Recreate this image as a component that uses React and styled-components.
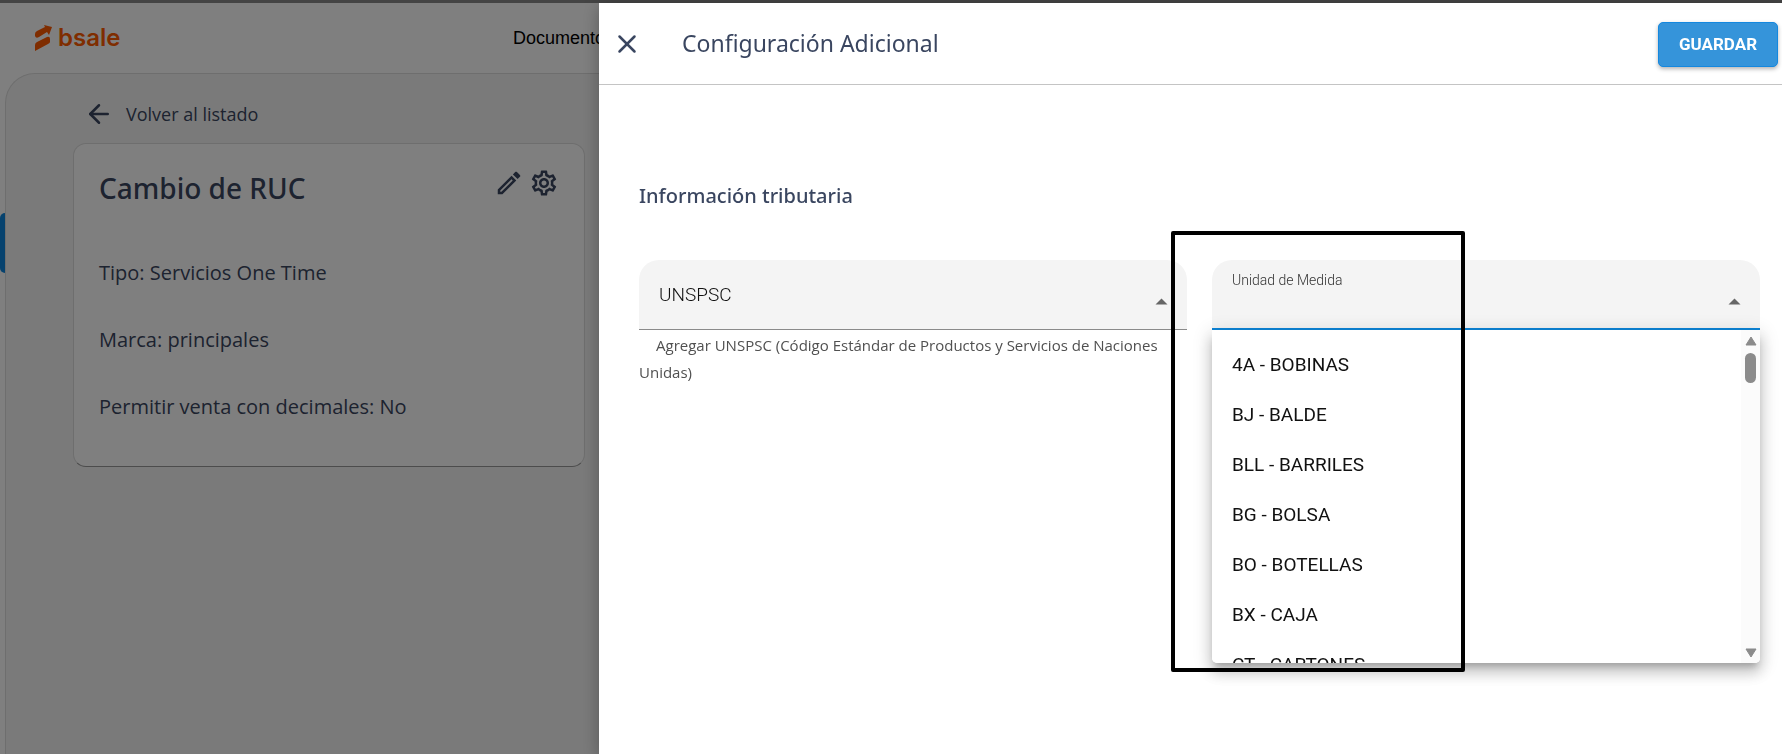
import React from "react";
import styled, { createGlobalStyle } from "styled-components";
import { ArrowLeft, X } from "lucide-react";
import { MdOutlineEdit, MdOutlineSettings } from "react-icons/md";

const ink = "#3a4660";
const noto = `"Noto Sans", "Open Sans", sans-serif`;
const openSans = `"Open Sans", "Noto Sans", sans-serif`;
const roboto = `Roboto, "Liberation Sans", sans-serif`;

const GlobalStyle = createGlobalStyle`
  *, *::before, *::after { box-sizing: border-box; }
  html, body, #root { height: 100%; }
  body {
    margin: 0;
    overflow: hidden;
    background: #fff;
    color: ${ink};
    font-family: ${noto};
  }
  h1, h2, p, ul { margin: 0; padding: 0; }
  button { font: inherit; color: inherit; cursor: pointer; }
`;

const Page = styled.div`
  min-height: 100vh;
  display: flex;
  flex-direction: column;
  border-top: 3px solid #444;
`;

const TopBar = styled.header`
  height: 70px;
  display: flex;
  align-items: center;
  padding: 0 34px;
`;

const Brand = styled.a`
  flex: 0 0 479px;
  display: flex;
  align-items: center;
  gap: 5px;
  color: #ff5a00;
  font: 600 24px/28px Inter, sans-serif;
  text-decoration: none;
`;

const NavLink = styled.a`
  color: #000;
  font: 400 18px/24px "Liberation Sans", Arial, sans-serif;
  text-decoration: none;
`;

const Workspace = styled.div`
  flex: 1;
  display: flex;
`;

const Rail = styled.nav`
  flex: 0 0 5px;
  padding-top: 140px;
`;

const RailTab = styled.a`
  display: block;
  height: 60px;
  border-radius: 5px 0 0 5px;
  background: #0d85dc;
`;

const Panel = styled.main`
  flex: 1;
  padding: 25px 67px;
  border: 1px solid #dcdcdc;
  border-width: 1px 0 0 1px;
  border-radius: 30px 0 0 0;
  background: #f5f5f5;
`;

const BackLink = styled.a`
  display: flex;
  align-items: center;
  gap: 12px;
  height: 30px;
  padding-left: 11px;
  color: ${ink};
  font-family: ${openSans};
  font-size: 18px;
  text-decoration: none;
`;

const Card = styled.section`
  max-width: 512px;
  margin-top: 14px;
  padding: 24px 25px 46px;
  border: 1px solid #dcdcdc;
  border-bottom-color: #999;
  border-radius: 13px;
  background: #fff;
`;

const CardHeader = styled.div`
  display: flex;
  justify-content: space-between;
  align-items: flex-start;
`;

const CardTitle = styled.h1`
  font-size: 28px;
  font-weight: 500;
  line-height: 40px;
`;

const CardActions = styled.div`
  display: flex;
  gap: 5px;
`;

const IconButton = styled.button`
  display: flex;
  width: 30px;
  height: 30px;
  padding: 0;
  border: 0;
  background: none;
`;

const Details = styled.div`
  display: grid;
  gap: 40px;
  margin-top: 51px;
  font-family: ${openSans};
  font-size: 20px;
  line-height: 27px;
`;

const Scrim = styled.div`
  position: fixed;
  inset: 3px 0 0;
  display: flex;
  justify-content: flex-end;
  background: rgba(0, 0, 0, 0.5);
`;

const Drawer = styled.aside`
  width: calc(100% - 599px);
  min-width: 600px;
  background: #fff;
  box-shadow: 0 4px 16px rgba(0, 0, 0, 0.3);
`;

const DrawerHeader = styled.header`
  display: flex;
  align-items: center;
  height: 82px;
  padding: 1px 4px 0 13px;
  border-bottom: 1px solid #c4c4c4;
`;

const DrawerTitle = styled.h2`
  flex: 1;
  margin-left: 40px;
  padding-bottom: 3px;
  font-size: 23px;
  font-weight: 400;
  line-height: 30px;
`;

const SaveButton = styled.button`
  width: 120px;
  height: 45px;
  padding: 0;
  border: 1px solid #1488df;
  border-radius: 5px;
  background: #3594da;
  box-shadow: 0 2px 4px rgba(0, 0, 0, 0.3);
  color: #fff;
  font: 700 17px/24px ${roboto};
`;

const DrawerBody = styled.div`
  padding: 97px 22px 40px 40px;
`;

const SectionTitle = styled.h2`
  font-size: 20px;
  font-weight: 500;
  line-height: 28px;
`;

const FieldRow = styled.div`
  display: grid;
  grid-template-columns: 1fr 1fr;
  align-items: start;
  gap: 25px;
  margin-top: 50px;
`;

const Field = styled.div`
  position: relative;
`;

const FieldBox = styled.div`
  display: grid;
  height: 70px;
  border-bottom: ${(p) => (p.$active ? "2px solid #0d85d8" : "1px solid #8a8a8a")};
  border-radius: 20px 20px 0 0;
  background: #f4f4f4;
  > * { grid-area: 1 / 1; }
`;

const FieldLabel = styled.label`
  align-self: ${(p) => (p.$floating ? "start" : "center")};
  padding: ${(p) => (p.$floating ? "10px 20px" : "0 20px")};
  color: ${(p) => (p.$floating ? "#333" : "#111")};
  font: 300 ${(p) => (p.$floating ? "14px/20px" : "19px/24px")} ${roboto};
  pointer-events: none;
`;

const FieldSelect = styled.select`
  appearance: none;
  width: 100%;
  border: 0;
  outline: 0;
  background: none;
  font: 400 19px/24px ${roboto};
`;

const Caret = styled.svg`
  align-self: center;
  justify-self: end;
  width: 13px;
  height: 7px;
  margin: 14px 19px 0;
  fill: #666;
  pointer-events: none;
`;

const HelperText = styled.p`
  padding-top: 2px;
  color: #505050;
  font: 400 15px/27px ${openSans};
  text-indent: 17px;
`;

const Menu = styled.div`
  position: absolute;
  top: 100%;
  left: 0;
  right: 0;
  display: flex;
  height: 333px;
  overflow: hidden;
  border-radius: 0 0 5px 5px;
  background: #fff;
`;

const MenuShadow = styled.div`
  position: absolute;
  top: 100%;
  left: 0;
  right: 0;
  height: 333px;
  border-radius: 0 0 5px 5px;
  box-shadow: 0 6px 6px -3px rgba(0, 0, 0, 0.2), 0 10px 13px 1px rgba(0, 0, 0, 0.14),
    0 4px 18px 3px rgba(0, 0, 0, 0.12);
`;

const OptionList = styled.ul`
  flex: 1;
  padding-top: 10px;
  list-style: none;
`;

const Option = styled.li`
  padding: 0 20px;
  color: #111;
  font: 400 19px/50px ${roboto};
`;

const ScrollTrack = styled.div`
  display: flex;
  flex-direction: column;
  align-items: center;
  width: 19px;
  padding: 6px 0 5px;
  background: #fbfbfb;
`;

const ScrollThumb = styled.div`
  width: 11px;
  height: 30px;
  margin: 7px 0 auto;
  border-radius: 6px;
  background: #8b8b8b;
`;

const ScrollArrow = styled.svg`
  width: 12px;
  height: 10px;
  fill: #8b8b8b;
  stroke: #8b8b8b;
  stroke-linejoin: round;
`;

const Highlight = styled.div`
  position: absolute;
  top: -29px;
  left: -41px;
  width: 294px;
  height: 441px;
  border: 4px solid #000;
  border-radius: 2px;
  pointer-events: none;
`;

const units = [
  "4A - BOBINAS",
  "BJ - BALDE",
  "BLL - BARRILES",
  "BG - BOLSA",
  "BO - BOTELLAS",
  "BX - CAJA",
  "CT - CARTONES",
];

function BrandMark() {
  return (
    <svg width="19" height="27" viewBox="0 0 19 27" fill="currentColor" aria-hidden="true">
      <path d="M10 0L18 2L15 10L13 7L5 12Q2 14 1 11V9Q1 7 3 6L11 2Z" />
      <path d="M1 26V20Q1 18 3 17L13 12Q16 11 16 14V17Q16 18 14 19Z" />
    </svg>
  );
}

function SelectField({ id, label, active, floating, children }) {
  return (
    <Field>
      <FieldBox $active={active}>
        <FieldSelect id={id} defaultValue="">
          <option value="" aria-label={label} />
        </FieldSelect>
        <FieldLabel htmlFor={id} $floating={floating}>{label}</FieldLabel>
        <Caret viewBox="0 0 13 7" aria-hidden="true">
          <path d="M0.5 6.5L6.5 0.5L12.5 6.5Z" />
        </Caret>
      </FieldBox>
      {children}
    </Field>
  );
}

export default function App() {
  return (
    <>
      <GlobalStyle />
      <Page>
        <TopBar>
          <Brand href="#inicio"><BrandMark />bsale</Brand>
          <NavLink href="#documentos">Documentos</NavLink>
        </TopBar>
        <Workspace>
          <Rail><RailTab href="#productos" aria-label="Productos" /></Rail>
          <Panel>
            <BackLink href="#listado">
              <ArrowLeft size={30} />
              Volver al listado
            </BackLink>
            <Card>
              <CardHeader>
                <CardTitle>Cambio de RUC</CardTitle>
                <CardActions>
                  <IconButton aria-label="Editar"><MdOutlineEdit size={30} /></IconButton>
                  <IconButton aria-label="Configurar"><MdOutlineSettings size={30} /></IconButton>
                </CardActions>
              </CardHeader>
              <Details>
                <p>Tipo: Servicios One Time</p>
                <p>Marca: principales</p>
                <p>Permitir venta con decimales: No</p>
              </Details>
            </Card>
          </Panel>
        </Workspace>
      </Page>
      <Scrim>
        <Drawer>
          <DrawerHeader>
            <IconButton aria-label="Cerrar"><X size={30} /></IconButton>
            <DrawerTitle>Configuración Adicional</DrawerTitle>
            <SaveButton>GUARDAR</SaveButton>
          </DrawerHeader>
          <DrawerBody>
            <SectionTitle>Información tributaria</SectionTitle>
            <FieldRow>
              <SelectField id="unspsc" label="UNSPSC">
                <HelperText>
                  Agregar UNSPSC (Código Estándar de Productos y Servicios de Naciones Unidas)
                </HelperText>
              </SelectField>
              <SelectField id="unidad" label="Unidad de Medida" active floating>
                <MenuShadow />
                <Menu>
                  <OptionList role="listbox" aria-label="Unidad de Medida">
                    {units.map((unit) => (
                      <Option key={unit} role="option">{unit}</Option>
                    ))}
                  </OptionList>
                  <ScrollTrack>
                    <ScrollArrow viewBox="0 0 12 10"><path d="M1 9L6 1L11 9Z" /></ScrollArrow>
                    <ScrollThumb />
                    <ScrollArrow viewBox="0 0 12 10"><path d="M1 1L6 9L11 1Z" /></ScrollArrow>
                  </ScrollTrack>
                </Menu>
                <Highlight />
              </SelectField>
            </FieldRow>
          </DrawerBody>
        </Drawer>
      </Scrim>
    </>
  );
}
